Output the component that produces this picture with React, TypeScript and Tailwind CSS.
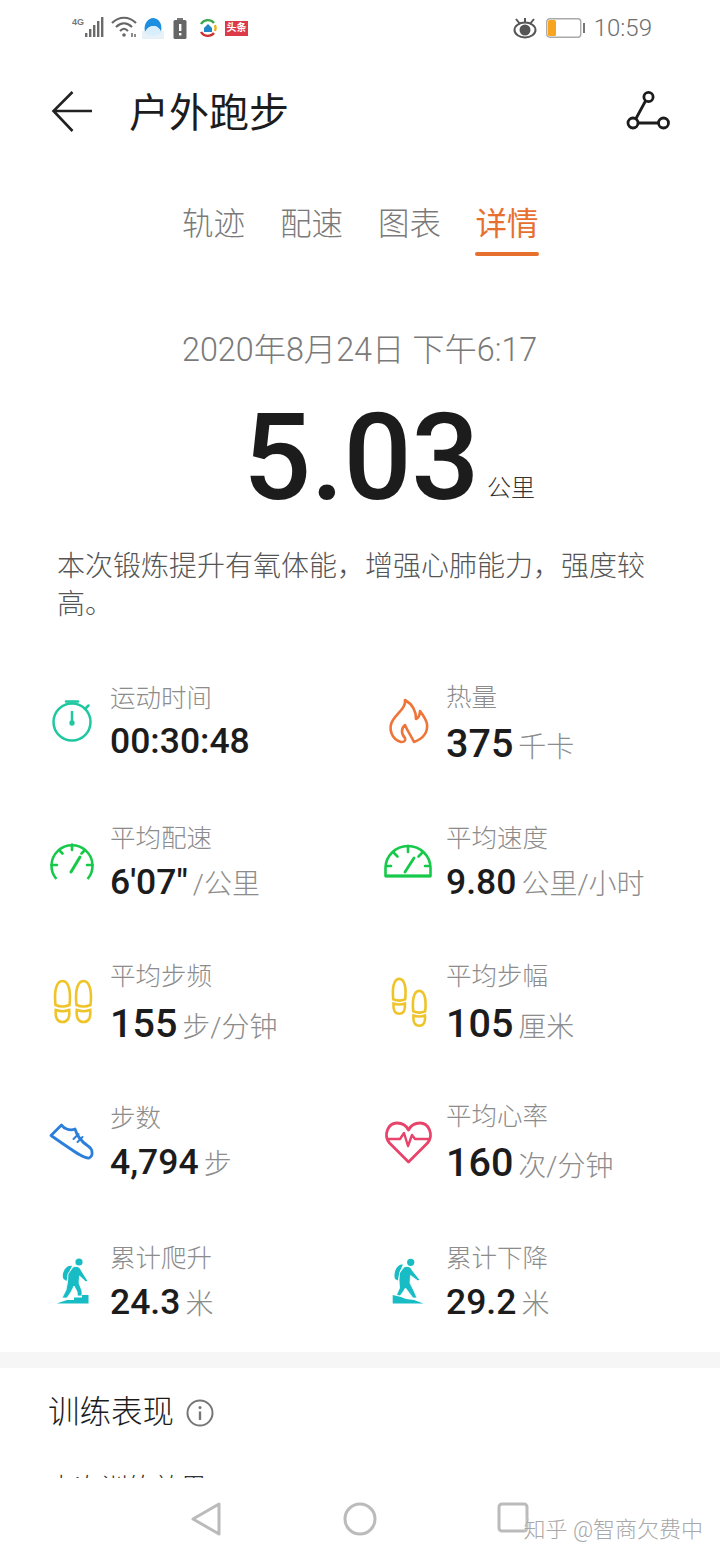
import React from "react";

const Stopwatch = () => (
  <g fill="none" stroke="#1fc8a0" strokeWidth="2.5" strokeLinecap="round">
    <circle cx="24" cy="30" r="18.5" />
    <path d="M18 9.5H30" />
    <path d="M37 17l3.5-3.5" />
    <path d="M24 20V30" />
    <circle cx="24" cy="31" r="1.4" fill="#1fc8a0" />
  </g>
);
const Gauge1 = () => (
  <g fill="none" stroke="#17c94a" strokeWidth="2.6" strokeLinecap="butt">
    <path d="M8.4 47A20.5 20.5 0 1 1 39.6 47" />
    <path d="M24 12.5V18M11 18l3.5 3.5M37 18l-3.5 3.5M3.5 33H9M44.5 33H39" strokeLinecap="round" />
    <path d="M23 40L32 25" strokeWidth="3" strokeLinecap="round" />
  </g>
);
const Gauge2 = () => (
  <g fill="none" stroke="#17c94a" strokeWidth="2.6" strokeLinejoin="round">
    <path d="M1.5 44V36A22.5 22 0 0 1 46.5 36V44Z" />
    <path d="M1 44H47" strokeWidth="3.2" />
    <path d="M24 14V20M10 21l3.5 3.5M38 21l-3.5 3.5M2 34H7M46 34H41" strokeLinecap="round" />
    <path d="M21 40L30 26" strokeWidth="2.8" strokeLinecap="round" />
  </g>
);
const Foot = ({ x, y, s }: { x: number; y: number; s: number }) => (
  <g transform={`translate(${x} ${y}) scale(${s})`} fill="none" stroke="#efc42a" strokeWidth={2.6 / s}>
    <path d="M1.5 25C0 12 2 1 8.5 1C15 1 17 12 15.5 25C11 27 6 27 1.5 25Z" />
    <path d="M1.8 30C6 31.5 11 31.5 15.2 30C16 38 13.5 42 8.5 42C3.5 42 1 38 1.8 30Z" />
  </g>
);
const Feet1 = () => (
  <g>
    <Foot x={6} y={8} s={1} />
    <Foot x={27} y={8} s={1} />
  </g>
);
const Feet2 = () => (
  <g>
    <Foot x={8} y={6} s={0.85} />
    <Foot x={28} y={18} s={0.85} />
  </g>
);
const Flame = () => (
  <path
    d="M21 8C22 16 14 20 9 28C4 36 7 47 17 50C20 50 22 49 21 46C17 42 17 36 21 33C23 38 26 42 30 50C38 47 44 41 43 32C42 27 39 23 36 19C36 23 34 26 32 27C32 19 28 12 21 8Z"
    fill="none"
    stroke="#ee7438"
    strokeWidth="2.6"
    strokeLinejoin="round"
  />
);
const Shoe = () => (
  <g fill="none" stroke="#2b7fdb" strokeWidth="2.8" strokeLinejoin="round" strokeLinecap="round">
    <path d="M3 23.5L13.5 13C16 17 22 19 27 17C29 24 34 30 40 34C45 37 45.5 44 41 46C37 46.5 33 44.5 3 23.5Z" />
    <path d="M25.5 27l5-5M29.5 30l5-5" strokeWidth="2" />
  </g>
);
const Heart = () => (
  <g fill="none" stroke="#e8436a" strokeWidth="2.8" strokeLinejoin="round" strokeLinecap="round">
    <path d="M24.5 50L5.5 31C-1 23 4 11 13 11C18 11 22 13 24.5 18C27 13 31 11 36 11C45 11 50 23 43.5 31Z" />
    <path d="M3 27H16L20 21L24 34L28 23L31 27H46" strokeWidth="2.4" />
  </g>
);
const HikerUp = () => (
  <g fill="#17bcc4">
    <circle cx="31" cy="10" r="3.6" />
    <path d="M17 17C19 14 22 13 24 14L20 22L18.5 29L15.5 27C14 24 15 20 17 17Z" />
    <path d="M25 15C29 13.5 32 15 33 18L39.5 28.5L38 30L31.5 24L31 31L34 39L34 44L29.5 44L29 39.5L26 34L23 40L19 46L14 46L18 38L19.5 30L20 22Z" stroke="#fff" strokeWidth="0.8" />
    <path d="M8.7 51.5L19 48H26V45.5H34V43H40.5V51.5Z" />
  </g>
);
const HikerDown = () => (
  <g fill="#17bcc4">
    <circle cx="26.7" cy="10.3" r="3.6" />
    <path d="M11.5 18C13 14 16 12 19 12.5L15.5 20L14 28.5L11 27C10 24 10.5 21 11.5 18Z" />
    <path d="M20 15C24 13.5 27 15 28 18L35.5 27.5L34 29L26.5 23.5L26 31L30 39L33 46L29 46L24.5 40L21.5 36L19 40L16 44L12.5 43L15.5 36L15 28L15.5 21Z" stroke="#fff" strokeWidth="0.8" />
    <path d="M8.7 43L17 45L22 47L30 48L39.5 51.5H8.7Z" />
  </g>
);

type Cell = {
  icon: React.ReactNode;
  label: string;
  value: string;
  unit: string;
  labelCls: string;
  valueCls: string;
  numCls: string;
};

const small = "text-[35.5px]";
const big = "text-[39.5px]";

const cells: Cell[] = [
  { icon: <Stopwatch />, label: "运动时间", value: "00:30:48", unit: "", labelCls: "mt-[10px]", valueCls: "mt-0", numCls: small },
  { icon: <Flame />, label: "热量", value: "375", unit: "千卡", labelCls: "mt-[9px]", valueCls: "mt-[4px]", numCls: big },
  { icon: <Gauge1 />, label: "平均配速", value: "6'07\"", unit: "/公里", labelCls: "mt-[10px]", valueCls: "mt-[1px]", numCls: small },
  { icon: <Gauge2 />, label: "平均速度", value: "9.80", unit: "公里/小时", labelCls: "mt-[10px]", valueCls: "mt-[1px]", numCls: small },
  { icon: <Feet1 />, label: "平均步频", value: "155", unit: "步/分钟", labelCls: "mt-[8px]", valueCls: "mt-[5px]", numCls: big },
  { icon: <Feet2 />, label: "平均步幅", value: "105", unit: "厘米", labelCls: "mt-[8px]", valueCls: "mt-[5px]", numCls: big },
  { icon: <Shoe />, label: "步数", value: "4,794", unit: "步", labelCls: "mt-[10px]", valueCls: "mt-[1px]", numCls: small },
  { icon: <Heart />, label: "平均心率", value: "160", unit: "次/分钟", labelCls: "mt-[8px]", valueCls: "mt-[4px]", numCls: big },
  { icon: <HikerUp />, label: "累计爬升", value: "24.3", unit: "米", labelCls: "mt-[10px]", valueCls: "mt-[1px]", numCls: small },
  { icon: <HikerDown />, label: "累计下降", value: "29.2", unit: "米", labelCls: "mt-[10px]", valueCls: "mt-[1px]", numCls: small },
];

function Stat({ c }: { c: Cell }) {
  return (
    <div className="flex gap-[14px]">
      <svg width="48" height="60" viewBox="0 0 48 60" className="mt-[22px] shrink-0 overflow-visible">
        {c.icon}
      </svg>
      <div className="flex flex-col">
        <div className={`h-[36px] text-[25.5px] leading-[36px] text-[#8c8c8c] font-light ${c.labelCls}`}>{c.label}</div>
        <div className={`flex h-[50px] items-baseline whitespace-nowrap leading-[50px] ${c.valueCls}`}>
          <span className={`font-medium text-[#1c1c1c] ${c.numCls}`}>{c.value}</span>
          {c.unit && <span className="ml-[5px] text-[28px] font-light text-[#8c8c8c]">{c.unit}</span>}
        </div>
      </div>
    </div>
  );
}

function StatusBar() {
  return (
    <div className="flex h-[56px] items-start justify-between pl-[72px] pr-[68px] pt-[16px]">
      <div className="flex items-center">
        <svg width="33" height="24" viewBox="0 0 33 24">
          <text x="0" y="9" fontSize="9" fontWeight="700" fill="#777" fontFamily="Liberation Sans, sans-serif">4G</text>
          <g fill="#6b6b6b">
            <rect x="13" y="17" width="2.4" height="4" />
            <rect x="17" y="13" width="2.4" height="8" />
            <rect x="21" y="9" width="2.4" height="12" />
            <rect x="25" y="5" width="2.4" height="16" />
            <rect x="29" y="1" width="2.4" height="20" />
          </g>
        </svg>
        <svg width="28" height="24" viewBox="0 0 28 24" className="ml-[6px]" fill="none" stroke="#666" strokeWidth="2.2">
          <path d="M1 7C8 0 18 0 25 7M5 11C10 6 16 6 21 11M9 15C12 12 14 12 17 15" />
          <circle cx="13" cy="19" r="1.8" fill="#666" stroke="none" />
          <path d="M21 17v4M24 18v3" strokeWidth="1.5" />
        </svg>
        <svg width="22" height="22" viewBox="0 0 22 22" className="ml-[3px]">
          <rect x="0" y="14" width="22" height="8" fill="#e8f1f8" />
          <path d="M3 15C1 6 7 1 11 1C16 1 21 6 19 15C17 10 14 9 11 9C8 9 5 11 3 15Z" fill="#1d8fe0" />
          <path d="M3 15C5 11 8 9 11 9C14 9 17 10 19 15C20 19 3 20 3 15Z" fill="#d9eefb" />
        </svg>
        <svg width="14" height="21" viewBox="0 0 14 21" className="ml-[9px]">
          <rect x="4" y="0" width="6" height="2" fill="#777" />
          <rect x="0.5" y="2" width="13" height="19" rx="1.5" fill="#666" />
          <rect x="6" y="6" width="2.4" height="7" fill="#fff" />
          <rect x="6" y="15" width="2.4" height="2.4" fill="#fff" />
        </svg>
        <svg width="20" height="20" viewBox="0 0 20 20" className="ml-[11px]" fill="none" strokeWidth="2.4">
          <path d="M3 6A8 8 0 0 1 16 5" stroke="#3aa84a" />
          <path d="M17 7A8 8 0 0 1 17 13" stroke="#e9b21f" />
          <path d="M16 15A8 8 0 0 1 3 14" stroke="#cf3030" />
          <path d="M10 6L14 10V14H6V10Z" fill="#1f87c8" stroke="none" />
        </svg>
        <div className="ml-[7px] flex h-[15px] w-[23px] items-center justify-center bg-[#dc3a48] text-[10px] font-bold leading-none text-white">头条</div>
      </div>
      <div className="flex items-center">
        <svg width="24" height="22" viewBox="0 0 24 22" fill="none" stroke="#555" strokeWidth="2">
          <ellipse cx="12" cy="13" rx="10.5" ry="7.5" />
          <circle cx="12" cy="13" r="4.5" fill="#555" />
          <path d="M3 2l4 5M21 2l-4 5M12 1v4" />
        </svg>
        <svg width="40" height="20" viewBox="0 0 40 20" className="ml-[9px]">
          <rect x="0.75" y="0.75" width="34" height="18.5" rx="3" fill="#fff" stroke="#aaa" strokeWidth="1.4" />
          <rect x="2" y="2" width="8" height="16" rx="1.5" fill="#f7a520" />
          <rect x="37" y="5" width="2" height="10" fill="#777" />
        </svg>
        <span className="ml-[8px] text-[24px] leading-[24px] text-[#6e6e6e] font-light">10:59</span>
      </div>
    </div>
  );
}

export default function App() {
  return (
    <div className="relative h-[1560px] w-[720px] overflow-hidden bg-white font-['Roboto','Noto_Sans_CJK_SC',sans-serif]">
      <StatusBar />

      <header className="flex h-[112px] items-center justify-between pl-[51px] pr-[50px]">
        <div className="flex items-center">
          <svg width="42" height="42" viewBox="0 0 42 42" fill="none" stroke="#222" strokeWidth="2.6" className="-mt-[3px]">
            <path d="M41 21H3M21.5 2L2.5 21L21.5 41" />
          </svg>
          <h1 className="ml-[36px] mt-[3px] text-[40px] font-normal leading-[44px] text-[#1c1c1c]">户外跑步</h1>
        </div>
        <svg width="44" height="40" viewBox="0 0 44 40" fill="none" stroke="#1c1c1c" strokeWidth="2.8" className="-mt-[3px]">
          <circle cx="22.5" cy="6" r="4.6" />
          <circle cx="7" cy="32" r="5" />
          <circle cx="37.5" cy="32" r="5" />
          <path d="M19.5 10L10 27.5M12 32H32.5" />
        </svg>
      </header>

      <nav className="flex h-[92px] items-start pl-[182px] pt-[35px]">
        {["轨迹", "配速", "图表"].map((t) => (
          <span key={t} className="mr-[35px] text-[31.5px] font-light leading-[44px] text-[#7a7a7a]">{t}</span>
        ))}
        <span className="-ml-[1px] flex flex-col items-center">
          <span className="text-[31.5px] font-normal leading-[44px] text-[#e8702f]">详情</span>
          <span className="mt-[5px] h-[4px] w-[64px] rounded-full bg-[#e8702f]"></span>
        </span>
      </nav>

      <div className="mt-[70px] h-[40px] pl-[182px] text-[32.3px] font-light leading-[40px] text-[#7a7a7a]">2020年8月24日 下午6:17</div>

      <div className="mt-[30px] flex h-[116px] items-baseline pl-[243px] leading-[116px]">
        <span className="text-[120px] font-medium tracking-[-0.5px] text-[#1c1c1c]">5.03</span>
        <span className="ml-[8px] -translate-y-[3px] text-[24px] font-light text-[#333]">公里</span>
      </div>

      <p className="mt-[32px] px-[57px] text-[28px] font-light leading-[38px] text-[#555]">本次锻炼提升有氧体能，增强心肺能力，强度较高。</p>

      <div className="mt-[46px] grid grid-cols-[336px_1fr] grid-rows-[140px_140px_140px_140px_122px] pl-[48px]">
        {cells.map((c) => (
          <Stat key={c.label} c={c} />
        ))}
      </div>

      <div className="h-[16px] bg-[#f6f6f6]"></div>

      <section className="h-[110px] overflow-hidden pl-[48px] pt-[24px]">
        <div className="flex h-[42px] items-center">
          <h2 className="text-[31.5px] font-light leading-[42px] text-[#1c1c1c]">训练表现</h2>
          <svg width="28" height="28" viewBox="0 0 28 28" className="ml-[12px]" fill="none" stroke="#777" strokeWidth="2">
            <circle cx="14" cy="14" r="12.5" />
            <path d="M14 12.5V21" strokeWidth="2.4" />
            <circle cx="14" cy="8.5" r="1.5" fill="#777" stroke="none" />
          </svg>
        </div>
        <div className="mt-[35px] text-[26.5px] font-light leading-[38px] text-[#333]">本次训练效果</div>
      </section>

      <div className="flex pl-[190px] pt-[24px]">
        <svg width="32" height="34" viewBox="0 0 32 34" fill="none" stroke="#bbb" strokeWidth="3" strokeLinejoin="round">
          <path d="M29 2V32L3 17Z" />
        </svg>
        <svg width="34" height="34" viewBox="0 0 34 34" className="ml-[121px]" fill="none" stroke="#bbb" strokeWidth="3">
          <circle cx="17" cy="17" r="15" />
        </svg>
        <svg width="32" height="32" viewBox="0 0 32 32" className="ml-[120px]" fill="none" stroke="#bbb" strokeWidth="3">
          <rect x="2" y="2" width="28" height="27" rx="3" />
        </svg>
      </div>

      <div className="absolute right-[17px] top-[1515px] text-[22px] font-light leading-[30px] text-[#a8a8a8] [text-shadow:0_0_2px_#fff]">知乎 @智商欠费中</div>
    </div>
  );
}
